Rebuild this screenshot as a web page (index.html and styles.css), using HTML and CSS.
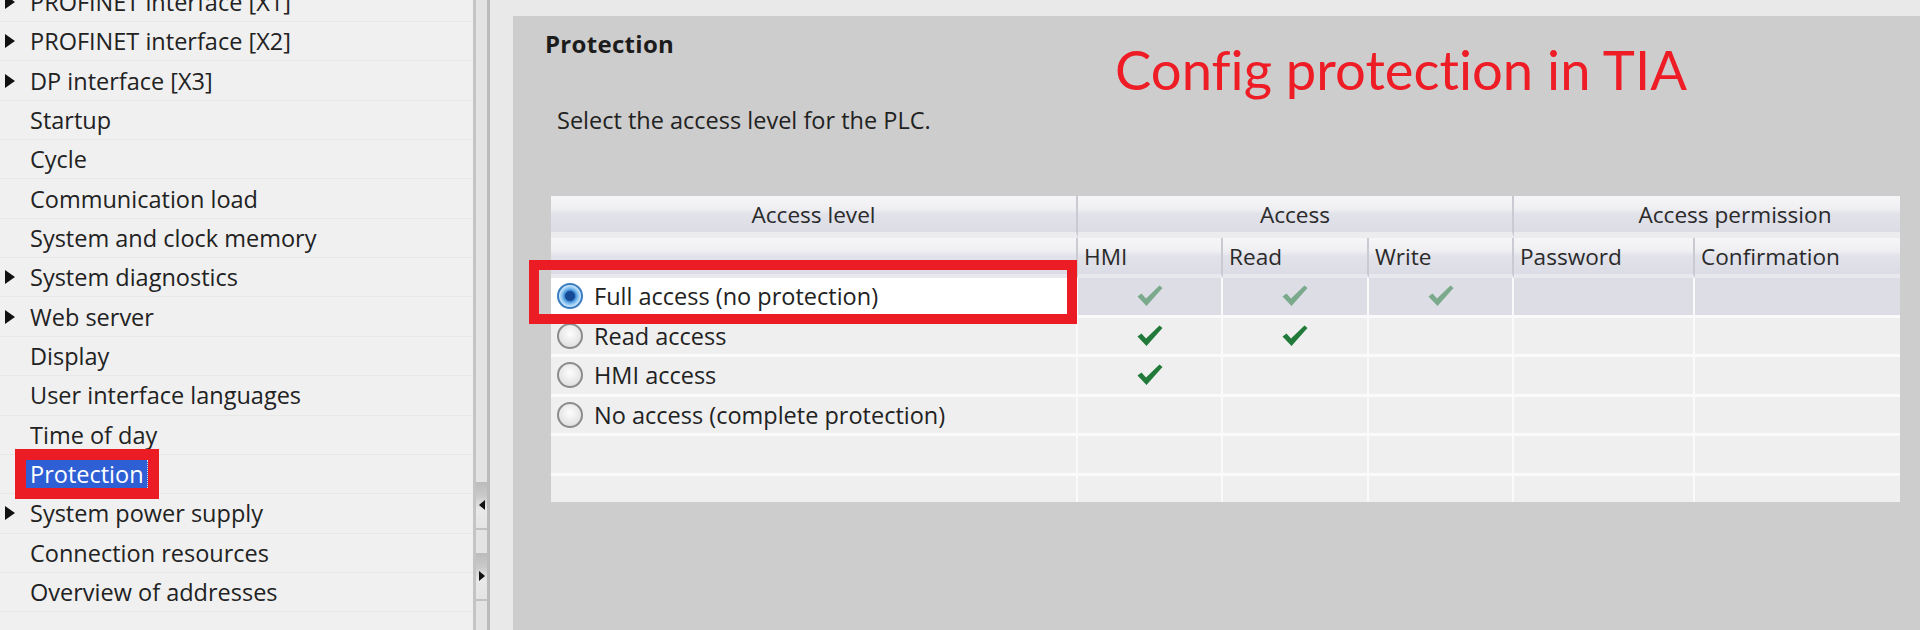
FILE: index.html
```html
<!DOCTYPE html>
<html lang="en">
<head>
  <meta charset="UTF-8" />
  <title>Protection - Device configuration</title>
  <link rel="stylesheet" href="styles.css">
</head>
<body>
  <div class="app">

    <!-- Device properties tree -->
    <aside class="tree">
      <ul class="tree-list">
        <li class="node has-kids"><span class="caret"></span>PROFINET interface [X1]</li>
        <li class="node has-kids"><span class="caret"></span>PROFINET interface [X2]</li>
        <li class="node has-kids"><span class="caret"></span>DP interface [X3]</li>
        <li class="node">Startup</li>
        <li class="node">Cycle</li>
        <li class="node">Communication load</li>
        <li class="node">System and clock memory</li>
        <li class="node has-kids"><span class="caret"></span>System diagnostics</li>
        <li class="node has-kids"><span class="caret"></span>Web server</li>
        <li class="node">Display</li>
        <li class="node">User interface languages</li>
        <li class="node">Time of day</li>
        <li class="node"><span class="selected">Protection</span></li>
        <li class="node has-kids"><span class="caret"></span>System power supply</li>
        <li class="node">Connection resources</li>
        <li class="node">Overview of addresses</li>
      </ul>
    </aside>

    <div class="splitter">
      <div class="split-btn"><span class="arrow-left"></span></div>
      <div class="split-btn second"><span class="arrow-right"></span></div>
    </div>

    <main class="editor">
      <section class="panel">
        <header class="panel-head">
          <h2>Protection</h2>
          <p class="note">Config protection in TIA</p>
        </header>
        <p class="intro">Select the access level for the PLC.</p>

        <div class="access-table">
          <!-- header row 1 -->
          <div class="hd top">Access level</div>
          <div class="hd top span3">Access</div>
          <div class="hd top span2 perm">Access permission</div>
          <!-- header row 2 -->
          <div class="hd sub"></div>
          <div class="hd sub">HMI</div>
          <div class="hd sub">Read</div>
          <div class="hd sub">Write</div>
          <div class="hd sub">Password</div>
          <div class="hd sub last">Confirmation</div>

          <!-- full access (selected) -->
          <div class="cell level active"><span class="radio on"></span>Full access (no protection)</div>
          <div class="cell chk sel"><svg class="tick faded" viewBox="0 0 28 24"><path d="M1.5 12.5 L5.5 9.5 L10 14.5 L23.5 1.5 L26.5 4 L10.5 22 Z"/></svg></div>
          <div class="cell chk sel"><svg class="tick faded" viewBox="0 0 28 24"><path d="M1.5 12.5 L5.5 9.5 L10 14.5 L23.5 1.5 L26.5 4 L10.5 22 Z"/></svg></div>
          <div class="cell chk sel"><svg class="tick faded" viewBox="0 0 28 24"><path d="M1.5 12.5 L5.5 9.5 L10 14.5 L23.5 1.5 L26.5 4 L10.5 22 Z"/></svg></div>
          <div class="cell sel"></div>
          <div class="cell sel last"></div>

          <!-- read access -->
          <div class="cell level"><span class="radio"></span>Read access</div>
          <div class="cell chk"><svg class="tick" viewBox="0 0 28 24"><path d="M1.5 12.5 L5.5 9.5 L10 14.5 L23.5 1.5 L26.5 4 L10.5 22 Z"/></svg></div>
          <div class="cell chk"><svg class="tick" viewBox="0 0 28 24"><path d="M1.5 12.5 L5.5 9.5 L10 14.5 L23.5 1.5 L26.5 4 L10.5 22 Z"/></svg></div>
          <div class="cell"></div>
          <div class="cell"></div>
          <div class="cell last"></div>

          <!-- hmi access -->
          <div class="cell level"><span class="radio"></span>HMI access</div>
          <div class="cell chk"><svg class="tick" viewBox="0 0 28 24"><path d="M1.5 12.5 L5.5 9.5 L10 14.5 L23.5 1.5 L26.5 4 L10.5 22 Z"/></svg></div>
          <div class="cell"></div>
          <div class="cell"></div>
          <div class="cell"></div>
          <div class="cell last"></div>

          <!-- no access -->
          <div class="cell level"><span class="radio"></span>No access (complete protection)</div>
          <div class="cell"></div>
          <div class="cell"></div>
          <div class="cell"></div>
          <div class="cell"></div>
          <div class="cell last"></div>

          <!-- empty rows -->
          <div class="cell"></div><div class="cell"></div><div class="cell"></div>
          <div class="cell"></div><div class="cell"></div><div class="cell last"></div>
          <div class="cell end"></div><div class="cell end"></div><div class="cell end"></div>
          <div class="cell end"></div><div class="cell end"></div><div class="cell end last"></div>

          <!-- annotation box -->
          <div class="mark-box"></div>
        </div>
      </section>
    </main>
  </div>
</body>
</html>
```

FILE: styles.css
```css
html, body {
  margin: 0;
  height: 100%;
}
body {
  font-family: "Open Sans", "Noto Sans", sans-serif;
  font-size: 23.5px;
  color: #222;
  overflow: hidden;
}
.app {
  display: flex;
  width: 1920px;
  height: 630px;
}

/* tree */
.tree {
  width: 473px;
  flex: none;
  background: #f0f0f0;
  overflow: hidden;
}
.tree-list {
  list-style: none;
  margin: -17.4px 0 0;
  padding: 0;
}
.node {
  height: 39.36px;
  box-sizing: border-box;
  display: flex;
  align-items: center;
  padding-left: 30px;
  border-bottom: 1px solid #e6e9e6;
  white-space: nowrap;
}
.node.has-kids {
  padding-left: 5px;
}
.caret {
  width: 0;
  height: 0;
  border-left: 10px solid #111;
  border-top: 7px solid transparent;
  border-bottom: 7px solid transparent;
  margin-right: 15px;
}
.selected {
  background: #2f5fd4;
  color: #fff;
  line-height: 28px;
  padding: 0 3px 0 4px;
  margin-left: -4px;
  border-right: 1px dotted #d8def0;
  outline: 11px solid #ec1c24;
}

/* splitter */
.splitter {
  width: 17px;
  flex: none;
  box-sizing: border-box;
  border-left: 3px solid #c4c4c4;
  border-right: 3px solid #bbbbbb;
  background: #e3e3e3;
  display: flex;
  flex-direction: column;
}
.split-btn {
  height: 48px;
  margin-top: 482px;
  box-sizing: border-box;
  border-bottom: 2px solid #c2c2c2;
  background: linear-gradient(#bcbcbc 0, #c9c9c9 30%, #e9e9e9 60%, #e4e4e4);
  display: flex;
  align-items: center;
  justify-content: center;
}
.split-btn.second {
  margin-top: 23px;
}
.arrow-left {
  width: 0;
  height: 0;
  border-right: 6px solid #111;
  border-top: 5px solid transparent;
  border-bottom: 5px solid transparent;
}
.arrow-right {
  width: 0;
  height: 0;
  border-left: 6px solid #111;
  border-top: 5px solid transparent;
  border-bottom: 5px solid transparent;
}

/* editor */
.editor {
  flex: 1;
  display: flex;
  background: #e9e9e9;
  padding: 16px 0 0 23px;
}
.panel {
  flex: 1;
  background: #cdcdcd;
  padding: 11.5px 20px 0 32px;
}
.panel-head {
  display: flex;
  align-items: flex-start;
  height: 76px;
}
.panel-head h2 {
  width: 570px;
  flex: none;
  margin: 0;
  font-size: 24px;
  font-weight: 700;
  line-height: 32px;
  letter-spacing: 0.3px;
  color: #1c1c1c;
}
.note {
  margin: 9.5px 0 0;
  font-family: Lato, "Open Sans", sans-serif;
  font-size: 54.4px;
  line-height: 1.2;
  font-variant-ligatures: none;
  color: #ee1c25;
  white-space: nowrap;
}
.intro {
  margin: 0 0 0 12px;
  line-height: 32px;
}

/* access table */
.access-table {
  position: relative;
  margin: 60.5px 0 0 6px;
  display: grid;
  grid-template-columns: 527px 145px 146px 145px 181px 1fr;
  grid-template-rows: 42px 40px repeat(5, 39.5px) 26.5px;
  background: #ebebef;
}
.hd {
  box-sizing: border-box;
  display: flex;
  align-items: center;
  font-size: 22.6px;
  color: #2a2a2a;
  background: linear-gradient(#f6f6f8 0, #efeff3 35%, #e2e2ea 50%, #dcdce6 100%);
  background-clip: padding-box;
  border-right: 2px solid #cacad2;
}
.hd.top {
  justify-content: center;
  border-bottom: 6px solid #ececef;
}
.hd.sub {
  padding-left: 6px;
  border-bottom: 4px solid #e8e8ee;
}
.hd.last, .hd.perm {
  border-right: none;
}
.span3 {
  grid-column: span 3;
}
.span2 {
  grid-column: span 2;
}
.perm {
  padding-left: 56px;
}
.cell {
  box-sizing: border-box;
  background: #efefef;
  border-right: 2px solid #fafafa;
  border-bottom: 3px solid #fafafa;
}
.cell.last {
  border-right: none;
}
.cell.end {
  border-bottom: none;
}
.cell.sel {
  background: #dcdde5;
}
.cell.level {
  display: flex;
  align-items: center;
  padding-left: 6px;
  white-space: nowrap;
}
.cell.level.active {
  background: #fff;
}
.cell.chk {
  display: flex;
  align-items: center;
  justify-content: center;
}
.radio {
  width: 26px;
  height: 26px;
  flex: none;
  box-sizing: border-box;
  border-radius: 50%;
  border: 2px solid #8c8c8c;
  background: radial-gradient(circle at 50% 40%, #fdfdfd, #d8d8d8);
  margin-right: 11px;
}
.radio.on {
  border-color: #3a7cc2;
  background: radial-gradient(circle, #174a94 0 4.5px, #3f8ad6 5.5px, #86c2f0 8px, #d2e9fa 11px);
}
.tick {
  width: 28px;
  height: 24px;
  fill: #217a3a;
}
.tick.faded {
  fill: #7aa98c;
}
.mark-box {
  position: absolute;
  left: -22px;
  top: 64px;
  width: 548px;
  height: 64px;
  box-sizing: border-box;
  border: 10px solid #ec1c24;
  pointer-events: none;
}
```
